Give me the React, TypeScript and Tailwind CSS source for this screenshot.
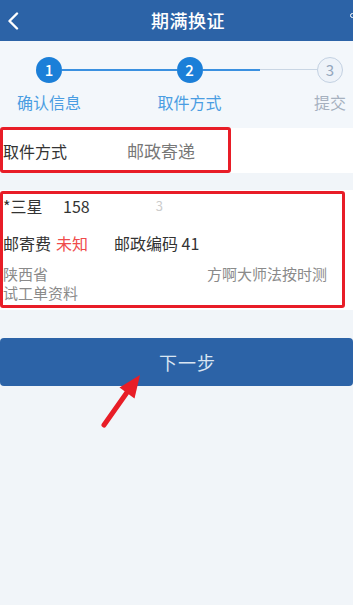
import React from 'react';

const FONT = { fontFamily: '"Noto Sans CJK SC", "Noto Sans", sans-serif' };

const StepCircle: React.FC<{ n: number; active: boolean }> = ({ n, active }) => (
    <div
        className={
            active
                ? 'w-[26px] h-[26px] rounded-full bg-[#1b7fd8] text-white text-[15px] font-medium flex items-center justify-center'
                : 'w-[26px] h-[26px] rounded-full bg-[#eef3f9] border-[1.5px] border-[#c3d1e2] text-[#93a6bd] text-[15px] flex items-center justify-center'
        }
    >
        {n}
    </div>
);

const StepLabel: React.FC<{ text: string; active: boolean }> = ({ text, active }) => (
    <div className="w-[26px] flex justify-center">
        <span className={`whitespace-nowrap text-[16px] ${active ? 'text-[#4a9de2]' : 'text-[#a6b1bf]'}`}>{text}</span>
    </div>
);

const App: React.FC = () => {
    return (
        <div className="relative w-full min-h-[605px] bg-[#f1f5f9]" style={FONT}>
            {/* header */}
            <div className="h-[41px] bg-[#2c63a7] flex items-center pl-[7px] overflow-hidden">
                <svg width="12" height="18" viewBox="0 0 12 18" fill="none">
                    <path d="M10 1.5 L2.5 9 L10 16.5" stroke="white" strokeWidth="2.4" strokeLinecap="round" strokeLinejoin="round" />
                </svg>
                <div className="flex-1 flex justify-center pl-[16px]">
                    <span className="text-white text-[18px] font-medium tracking-[0.5px]">期满换证</span>
                </div>
                <div className="w-[12px] h-[20px] flex items-start justify-end pt-[2px]">
                    <div className="w-[5px] h-[5px] rounded-full border-[1.5px] border-white -mr-[2px]" />
                </div>
            </div>

            {/* steps */}
            <div className="bg-[#f3f7fb] h-[87px] pt-[16px] pl-[36px] pr-[10px]">
                <div className="flex items-center">
                    <StepCircle n={1} active />
                    <div className="flex-1 h-[2px] bg-[#3a90e0]" />
                    <StepCircle n={2} active />
                    <div className="flex-1 flex">
                        <div className="flex-1 h-[2px] bg-[#3a90e0]" />
                        <div className="flex-1 h-px bg-[#c9d6e4]" />
                    </div>
                    <StepCircle n={3} active={false} />
                </div>
                <div className="flex items-center mt-[7px]">
                    <StepLabel text="确认信息" active />
                    <div className="flex-1" />
                    <StepLabel text="取件方式" active />
                    <div className="flex-1" />
                    <StepLabel text="提交" active={false} />
                </div>
            </div>

            {/* pickup method */}
            <div className="relative bg-white h-[45px] flex items-center pl-[3px]">
                <span className="w-[124px] text-[16px] text-[#333]">取件方式</span>
                <span className="text-[17px] text-[#777]">邮政寄递</span>
                <div className="absolute left-0 top-[-1px] w-[231px] h-[46px] border-[3px] border-[#e81d27] rounded-[3px]" />
            </div>

            {/* address card */}
            <div className="relative bg-white h-[120px] mt-[17px] pl-[3px] pt-[6px]">
                <div className="h-[20px] flex items-center text-[16px] text-[#333]">
                    <span className="w-[60px]">*三星</span>
                    <span>158</span>
                    <span className="ml-[66px] text-[#ccc] text-[13px]">3</span>
                </div>
                <div className="h-[20px] mt-[17px] flex items-center text-[16px] text-[#333]">
                    <span>邮寄费</span>
                    <span className="ml-[5px] text-[#ef4b4b]">未知</span>
                    <span className="ml-[26px]">邮政编码 41</span>
                </div>
                <div className="mt-[11px] text-[15px] leading-[19px] text-[#8a8a8a]">
                    <div className="flex">
                        <span>陕西省</span>
                        <span className="ml-[159px]">方啊大师法按时测</span>
                    </div>
                    <div>试工单资料</div>
                </div>
                <div className="absolute left-0 top-[1px] w-[345px] h-[117px] border-[3px] border-[#e81d27] rounded-[3px]" />
            </div>

            {/* next button */}
            <div className="mt-[28px]">
                <button className="w-full h-[48px] rounded-[4px] bg-[#2c63a7] text-[#d9e5f2] text-[18px] tracking-[1px] pl-[22px]">
                    下一步
                </button>
            </div>

            {/* red arrow */}
            <svg className="absolute left-0 top-0 pointer-events-none" width="353" height="605" viewBox="0 0 353 605">
                <line x1="104" y1="425" x2="128" y2="391" stroke="#e81d27" strokeWidth="5" strokeLinecap="round" />
                <polygon points="140,375 119.5,387.5 134.5,398.5" fill="#e81d27" />
            </svg>
        </div>
    );
};

export default App;
